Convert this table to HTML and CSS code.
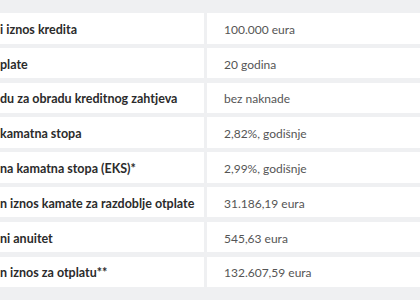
FILE: index.html
```html
<!DOCTYPE html>
<html>
<head>
<meta charset="utf-8">
<link rel="stylesheet" href="styles.css">
</head>
<body>
<div class="table">
  <div class="label">i iznos kredita</div><div class="value">100.000 eura</div>
  <div class="label">plate</div><div class="value">20 godina</div>
  <div class="label">du za obradu kreditnog zahtjeva</div><div class="value">bez naknade</div>
  <div class="label">kamatna stopa</div><div class="value">2,82%, godišnje</div>
  <div class="label">na kamatna stopa (EKS)*</div><div class="value">2,99%, godišnje</div>
  <div class="label">n iznos kamate za razdoblje otplate</div><div class="value">31.186,19 eura</div>
  <div class="label">ni anuitet</div><div class="value">545,63 eura</div>
  <div class="label">n iznos za otplatu**</div><div class="value">132.607,59 eura</div>
</div>
</body>
</html>
```
FILE: styles.css
```css
html, body {
  margin: 0;
  padding: 0;
  background: #eff0f2;
  overflow: hidden;
  width: 420px;
  height: 300px;
}
.table {
  display: grid;
  grid-template-columns: 204px 1fr;
  column-gap: 3px;
  row-gap: 4.3px;
  padding-top: 13px;
  font-family: Lato, "Open Sans", sans-serif;
}
.label, .value {
  background: #ffffff;
  height: 30.5px;
  display: flex;
  align-items: center;
  white-space: nowrap;
  overflow: hidden;
  padding-top: 2px;
  box-sizing: border-box;
}
.label {
  padding-left: 0;
  font-size: 12.5px;
  font-weight: 700;
  color: #2b2b2b;
}
.value {
  padding-left: 17px;
  font-size: 12px;
  color: #555555;
}
```
